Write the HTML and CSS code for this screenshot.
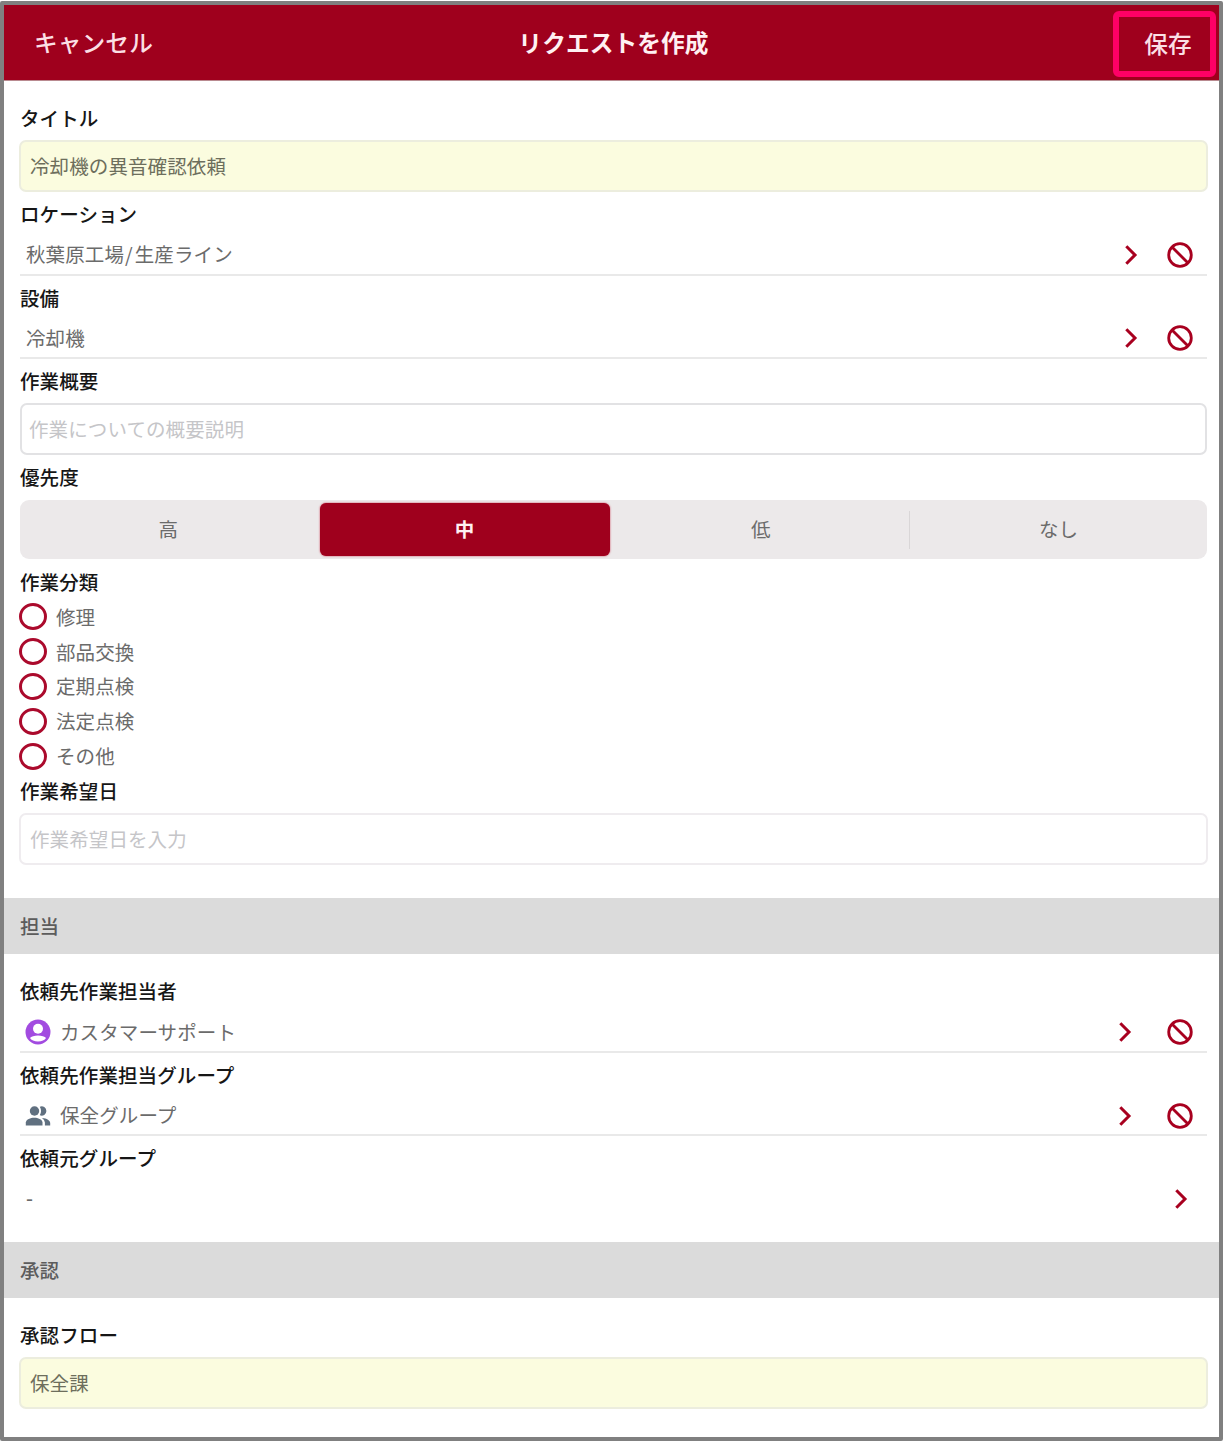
FILE: index.html
```
<!DOCTYPE html>
<html lang="ja">
  <head>
    <meta charset="UTF-8">
    <title>リクエストを作成</title>
    <link rel="stylesheet" href="styles.css">
  </head>
  <body>
    <!-- shared icons -->
    <svg class="defs" width="0" height="0">
      <symbol id="chevron" viewBox="0 0 14 22"><path d="M2.3 2.3 L11 11 L2.3 19.7" /></symbol>
      <symbol id="ban" viewBox="0 0 26 26"><circle cx="13" cy="13" r="11.3" /><path d="M5 5 L21 21" /></symbol>
    </svg>

    <div class="screen">
      <header>
        <a class="cancel">キャンセル</a>
        <h1>リクエストを作成</h1>
        <a class="save">保存</a>
      </header>

      <div class="form">
        <h3>タイトル</h3>
        <div class="field filled">冷却機の異音確認依頼</div>

        <h3>ロケーション</h3>
        <div class="row">
          <span>秋葉原工場<i>/</i>生産ライン</span>
          <svg class="chevron"><use href="#chevron" /></svg>
          <svg class="ban"><use href="#ban" /></svg>
        </div>

        <h3>設備</h3>
        <div class="row">
          <span>冷却機</span>
          <svg class="chevron"><use href="#chevron" /></svg>
          <svg class="ban"><use href="#ban" /></svg>
        </div>

        <h3>作業概要</h3>
        <div class="field summary">作業についての概要説明</div>

        <h3>優先度</h3>
        <div class="segments">
          <div>高</div>
          <div class="active">中</div>
          <div class="divided">低</div>
          <div>なし</div>
        </div>

        <h3>作業分類</h3>
        <ul class="radios">
          <li>修理</li>
          <li>部品交換</li>
          <li>定期点検</li>
          <li>法定点検</li>
          <li>その他</li>
        </ul>

        <h3>作業希望日</h3>
        <div class="field date">作業希望日を入力</div>
      </div>

      <h2>担当</h2>
      <div class="form assign">
        <h3>依頼先作業担当者</h3>
        <div class="row">
          <svg class="user" viewBox="0 0 26 26">
            <circle cx="13" cy="13" r="12.5" fill="#a24be0" />
            <circle cx="13" cy="9.8" r="5" fill="#fff" />
            <path d="M5 19 C7 15.6 19 15.6 21 19 C19 23.6 7 23.6 5 19 Z" fill="#fff" />
          </svg>
          <span>カスタマーサポート</span>
          <svg class="chevron"><use href="#chevron" /></svg>
          <svg class="ban"><use href="#ban" /></svg>
        </div>

        <h3>依頼先作業担当グループ</h3>
        <div class="row">
          <svg class="user" viewBox="0 0 26 26">
            <g fill="#607080">
              <circle cx="9.5" cy="8" r="4.7" />
              <path d="M14.8 3.7 A4.7 4.7 0 1 1 14.8 12.3 Q17.3 8 14.8 3.7 Z" />
              <path d="M0.8 22.5 V19.5 C2 13.3 16.5 13.3 17.5 19.5 V22.5 Z" />
              <path d="M17 15 C22 15.3 25.2 17.5 25.2 20 V22.5 H19.9 V19.5 Q19.6 16.8 17 15 Z" />
            </g>
          </svg>
          <span>保全グループ</span>
          <svg class="chevron"><use href="#chevron" /></svg>
          <svg class="ban"><use href="#ban" /></svg>
        </div>

        <h3>依頼元グループ</h3>
        <div class="row last">
          <span>-</span>
          <svg class="chevron"><use href="#chevron" /></svg>
        </div>
      </div>

      <h2 class="approval">承認</h2>
      <div class="form">
        <h3>承認フロー</h3>
        <div class="field filled">保全課</div>
      </div>
    </div>
  </body>
</html>
```
FILE: styles.css
```
*, *:before { box-sizing: border-box; }
html { margin: 0; padding: 0; background-color: white; }
body { margin: 0; padding: 1px 0; font-family: "Noto Sans CJK JP", sans-serif; font-size: 19.5px; letter-spacing: .1px; color: #6b6b6b; }

h1, h2, h3 { margin: 0; }

.defs { display: block; position: absolute; }
.screen { height: 1440px; border: 4px solid #808080; border-radius: 2px; overflow: hidden; background-color: white; }

header { display: grid; grid-template-columns: 1fr auto 1fr; align-items: center; height: 76px;
         background-color: #9f001d; border-bottom: 1px solid #b98a90; color: #fbdfe4; font-size: 23.7px; }
header h1 { padding: 0 0 2px 4px; font-size: 23.7px; font-weight: bold; color: #fff0f2; }
.cancel { padding: 0 0 2px 30px; font-weight: 500; }
.save { justify-self: end; width: 103px; height: 66px; margin: 3px 3px 0 0; padding: 0 0 3px 7px;
        border: 6px solid #ff0066; border-radius: 6px;
        display: flex; align-items: center; justify-content: center; font-weight: 500; }

.form { padding: 15px 12px 0 16px; }

h3 { height: 44px; line-height: 43px; font-size: 19.5px; font-weight: 500; color: #161616; }

h2 { height: 56px; line-height: 56px; margin-top: 33px; padding-left: 16px; font-size: 19.5px; font-weight: 500;
     color: #5c5c5c; background-color: #dbdbdb; }
h2.approval { margin-top: 24px; }

.field { height: 52px; margin: 0 -1px; padding-left: 9px; line-height: 48px;
         border: 2px solid #e2e2e4; border-radius: 7px; color: #c5c5c8; }
.filled { color: #6d6e5c; background-color: #fbfcdf; border-color: #ecedde; }
.summary { margin: 0; padding-left: 7px; }
.date { border-color: #efecef; }

.row { display: flex; align-items: center; height: 39.5px; padding: 0 14px 0 6px; border-bottom: 2px solid #e9e9e9; }
.row span { flex: 1; padding-bottom: 2px; line-height: 35px; }
.row i { margin: 0 2px 0 1px; font-style: normal; }
.row.last { height: 38px; padding-right: 19px; border-bottom: none; }
.row.last span { padding-bottom: 4px; font-weight: 500; }

.chevron { width: 14px; height: 22px; margin-right: 29px; fill: none; stroke: #a8001f; stroke-width: 3; }
.assign .chevron { margin-right: 35px; }
.assign .last .chevron { margin-right: 0; }
.ban { width: 26px; height: 26px; fill: none; stroke: #a8001f; stroke-width: 2.8; }
.user { width: 26px; height: 26px; margin: 0 9px 0 -1px; }

.segments { display: grid; grid-template-columns: repeat(4, 1fr); height: 59px; margin: 1px 0 .5px 0; padding: 3px 0;
            border-radius: 9px; background-color: #ece9ea; }
.segments div { line-height: 52px; text-align: center; }
.segments .active { margin: 0 4px 0 3px; border-radius: 6px; background-color: #9f001d; color: #fff0f2; font-weight: bold;
                    box-shadow: 0 0 2px #c8324c; }
.segments .divided { padding-right: 2px; background: linear-gradient(#d9d6d7, #d9d6d7) right center / 1px 38px no-repeat; }

.radios { list-style: none; margin: -4px 0; padding: 0; }
.radios li { display: flex; align-items: center; height: 34.8px; line-height: 34px; }
.radios li:before { content: ""; width: 28px; height: 27px; margin: 0 9px 0 -1px; border: 3px solid #ab0a2c; border-radius: 50%; }
```
